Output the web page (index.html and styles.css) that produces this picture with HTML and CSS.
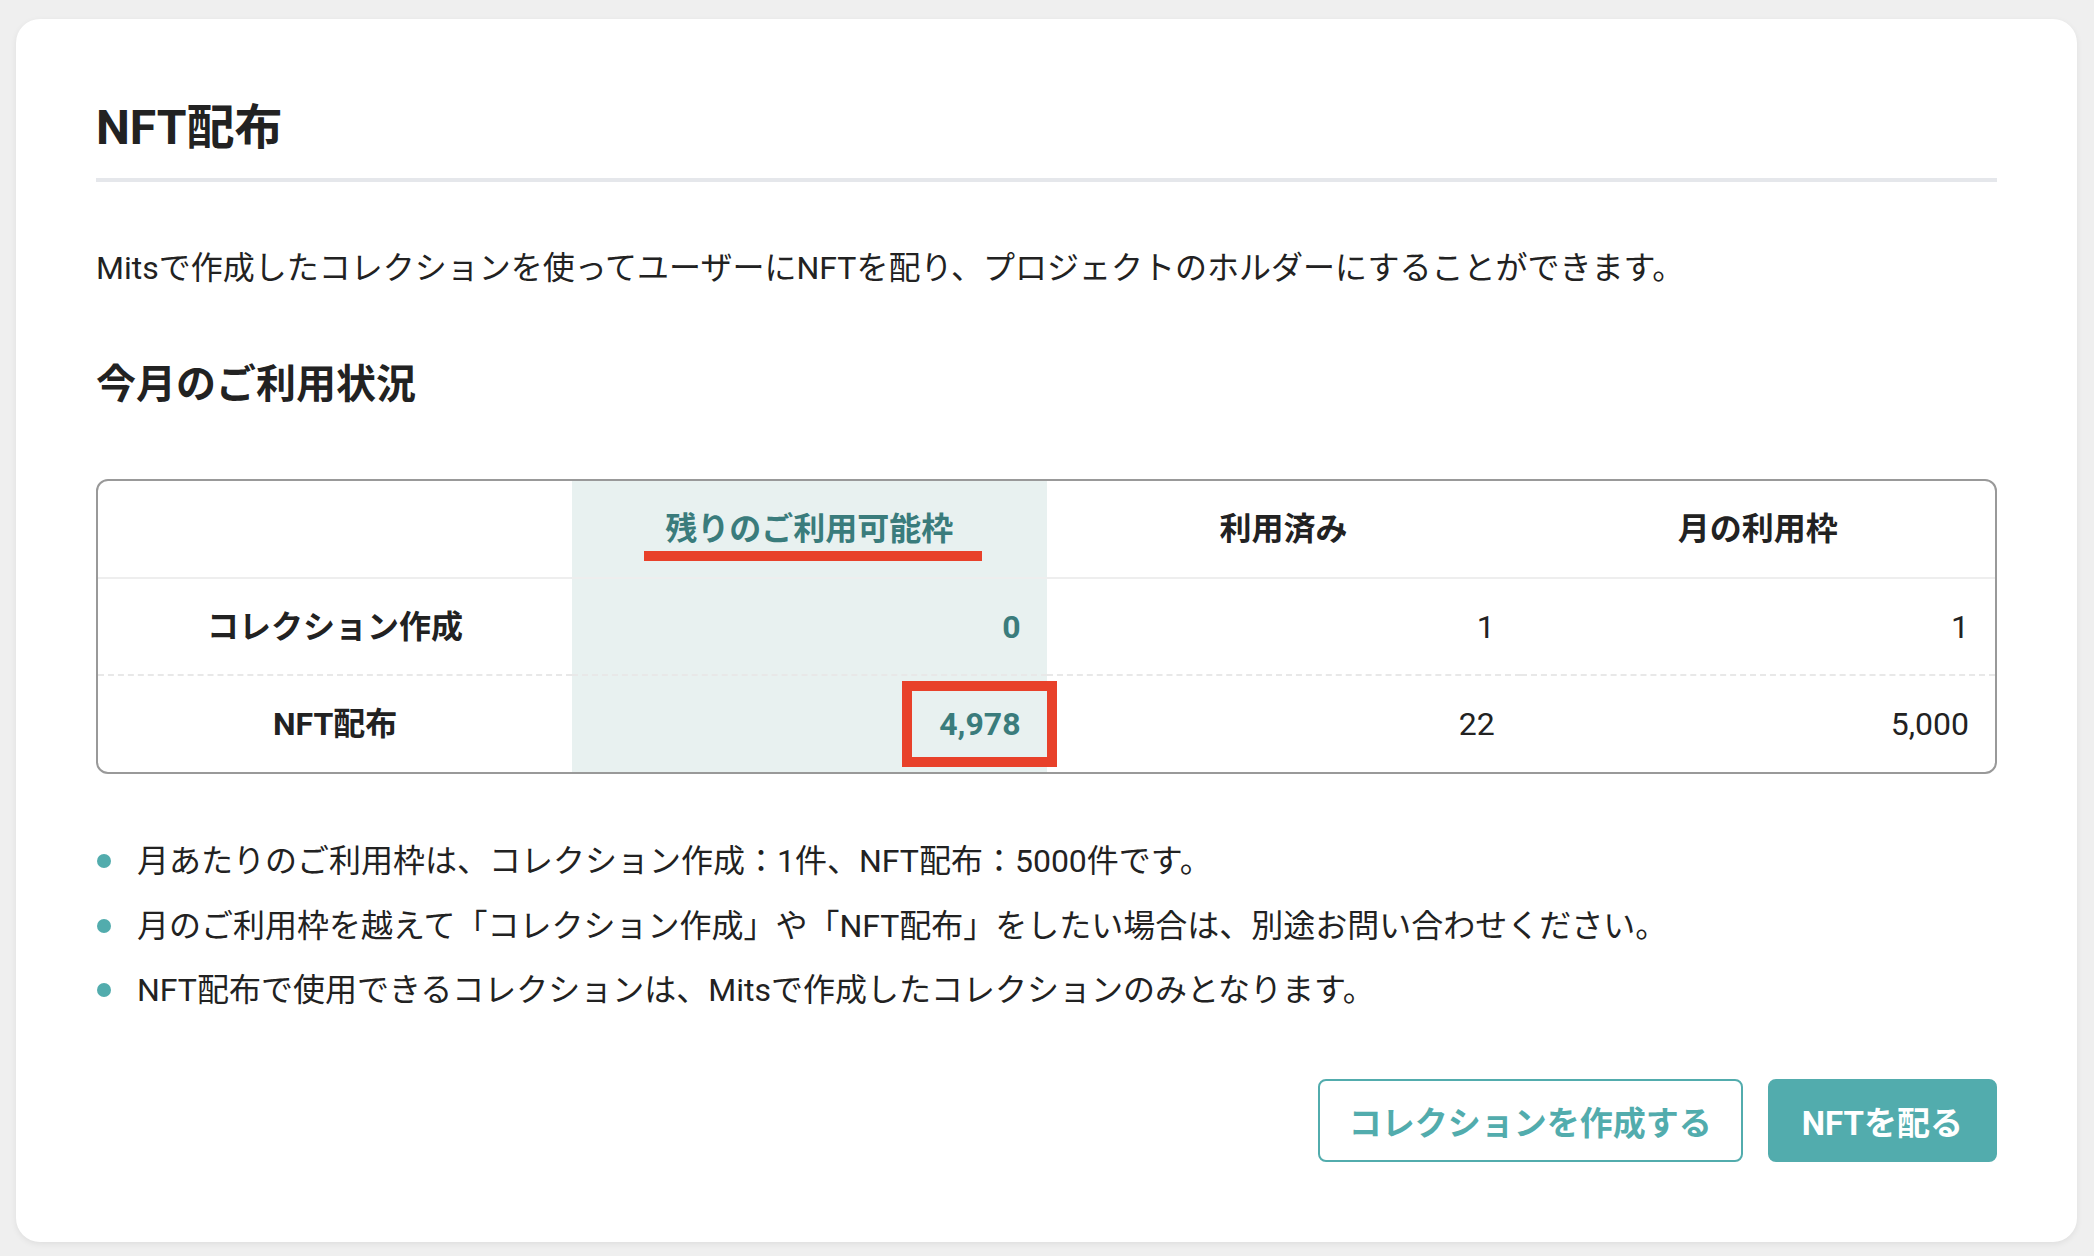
FILE: index.html
```html
<!DOCTYPE html>
<html lang="ja">
<head>
    <meta charset="UTF-8">
    <meta name="viewport" content="width=device-width, initial-scale=1.0">
    <title>NFT配布</title>
    <link rel="stylesheet" href="styles.css">
</head>
<body>
    <div class="card">
        <h1 class="page-title">NFT配布</h1>
        <p class="lead">Mitsで作成したコレクションを使ってユーザーにNFTを配り、プロジェクトのホルダーにすることができます。</p>

        <h2 class="section-title">今月のご利用状況</h2>

        <div class="usage-box">
            <table class="usage-table">
                <thead>
                    <tr>
                        <th></th>
                        <th class="remain"><span class="underline-mark">残りのご利用可能枠</span></th>
                        <th>利用済み</th>
                        <th>月の利用枠</th>
                    </tr>
                </thead>
                <tbody>
                    <tr>
                        <th>コレクション作成</th>
                        <td class="remain">0</td>
                        <td>1</td>
                        <td>1</td>
                    </tr>
                    <tr>
                        <th>NFT配布</th>
                        <td class="remain"><span class="box-mark">4,978</span></td>
                        <td>22</td>
                        <td>5,000</td>
                    </tr>
                </tbody>
            </table>
        </div>

        <ul class="notes">
            <li>月あたりのご利用枠は、コレクション作成：1件、NFT配布：5000件です。</li>
            <li>月のご利用枠を越えて「コレクション作成」や「NFT配布」をしたい場合は、別途お問い合わせください。</li>
            <li>NFT配布で使用できるコレクションは、Mitsで作成したコレクションのみとなります。</li>
        </ul>

        <div class="actions">
            <button class="btn btn-outline">コレクションを作成する</button>
            <button class="btn btn-fill">NFTを配る</button>
        </div>
    </div>
</body>
</html>
```

FILE: styles.css
```css
body {
    margin: 0;
    padding: 19px 17px 14px 16px;
    background-color: #efefef;
    font-family: Roboto, "Noto Sans CJK JP", sans-serif;
    color: #222;
}
.card {
    background: #fff;
    border-radius: 24px;
    padding: 76px 80px 80px;
    box-shadow: 0 2px 6px rgba(0, 0, 0, 0.07);
}
.page-title {
    margin: 0;
    font-size: 48px;
    line-height: 66px;
    font-weight: 700;
    padding-bottom: 17px;
    border-bottom: 4px solid #e5e7eb;
}
.lead {
    margin: 61px 0 0;
    font-size: 32px;
    line-height: 50px;
}
.section-title {
    margin: 64px 0 0;
    font-size: 40px;
    line-height: 56px;
    font-weight: 700;
}
.usage-box {
    margin-top: 66px;
    border: 2px solid #999;
    border-radius: 12px;
    overflow: hidden;
}
.usage-table {
    width: 100%;
    border-collapse: collapse;
    table-layout: fixed;
    font-size: 32px;
}
.usage-table th,
.usage-table td {
    padding: 0 26px;
    height: 95px;
    line-height: 40px;
}
.usage-table thead th {
    height: 96px;
    font-weight: 700;
    text-align: center;
    border-bottom: 2px solid #eeeeee;
}
.usage-table tbody th {
    font-weight: 700;
    text-align: center;
}
.usage-table tbody tr + tr th,
.usage-table tbody tr + tr td {
    height: 96px;
    border-top: 2px dashed #e8e8e8;
}
.usage-table td {
    text-align: right;
}
.usage-table .remain {
    background-color: #e8f1f0;
    color: #3a7c7c;
    font-weight: 700;
}
.underline-mark,
.box-mark {
    position: relative;
    display: inline-block;
}
.underline-mark::after {
    content: "";
    position: absolute;
    left: -21px;
    right: -29px;
    top: 42px;
    height: 10px;
    background: #e8412a;
}
.box-mark::after {
    content: "";
    position: absolute;
    left: -37px;
    right: -36px;
    top: -23px;
    height: 86px;
    border: 10px solid #e8412a;
    box-sizing: border-box;
}
.notes {
    list-style: none;
    margin: 62px 0 0;
    padding: 0;
    display: flex;
    flex-direction: column;
    gap: 14.5px;
    font-size: 32px;
    line-height: 50px;
}
.notes li {
    display: flex;
    align-items: center;
}
.notes li::before {
    content: "";
    flex: none;
    width: 14px;
    height: 14px;
    margin: 0 26px 0 1px;
    border-radius: 50%;
    background: #52acad;
}
.actions {
    margin-top: 64px;
    display: flex;
    justify-content: flex-end;
    gap: 25px;
}
.btn {
    height: 83px;
    padding: 0 29px;
    font-family: inherit;
    font-size: 33px;
    font-weight: 700;
    border-radius: 8px;
    border: 2.5px solid #52acad;
    cursor: pointer;
}
.btn-outline {
    background: #fff;
    color: #52acad;
}
.btn-fill {
    padding: 0 32px;
    background: #52acad;
    color: #fff;
}
```
